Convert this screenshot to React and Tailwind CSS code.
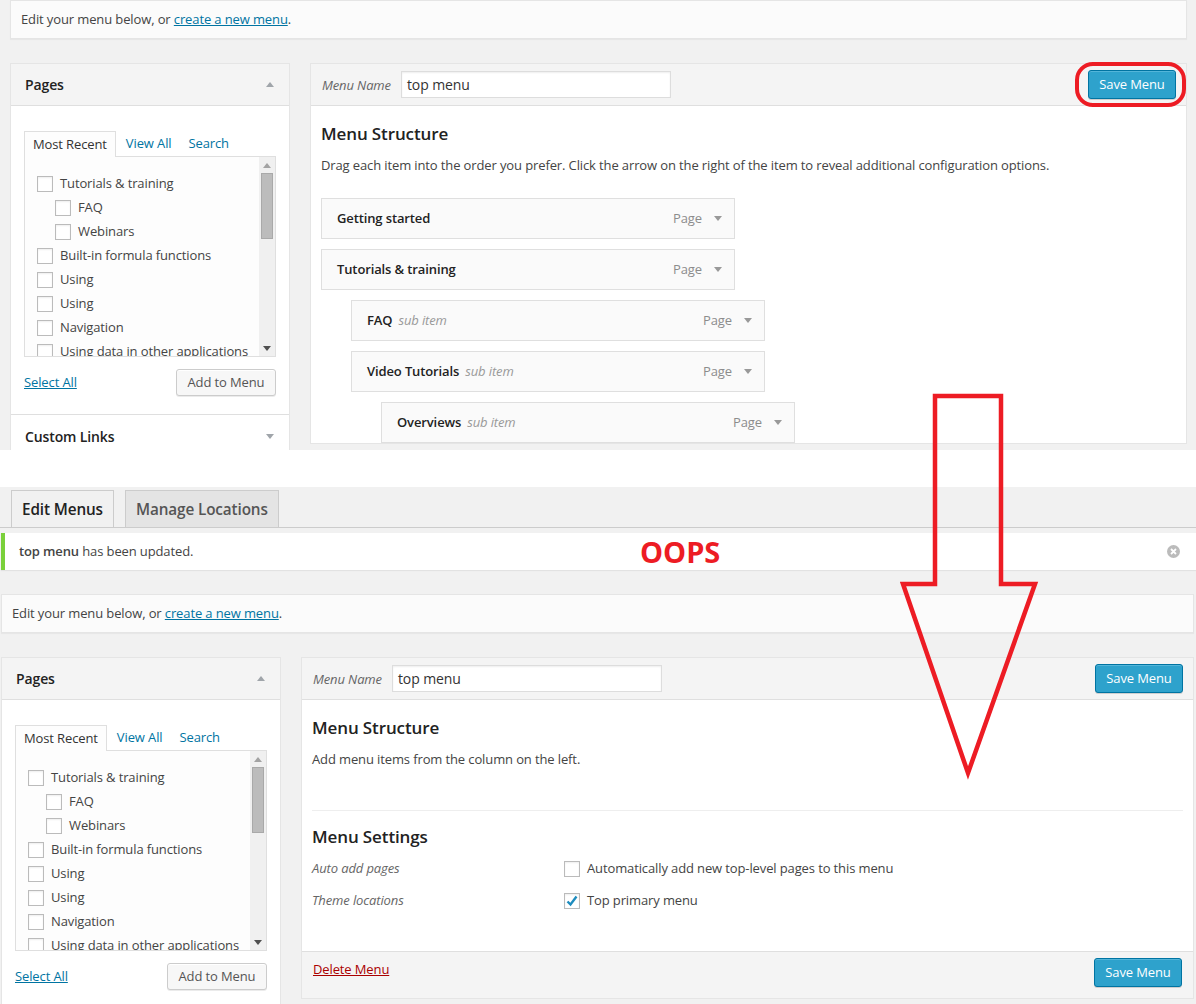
import React from 'react'

const pageItems = [
  { label: 'Tutorials & training' },
  { label: 'FAQ', child: true },
  { label: 'Webinars', child: true },
  { label: 'Built-in formula functions' },
  { label: 'Using' },
  { label: 'Using' },
  { label: 'Navigation' },
  { label: 'Using data in other applications' },
]

const menuItems = [
  { title: 'Getting started', depth: 0 },
  { title: 'Tutorials & training', depth: 0 },
  { title: 'FAQ', depth: 1, sub: true },
  { title: 'Video Tutorials', depth: 1, sub: true },
  { title: 'Overviews', depth: 2, sub: true },
]

const depthClass = ['', 'ml-[30px]', 'ml-[60px]']

function Triangle({ up = false, color = '#a0a5aa' }) {
  return (
    <svg width="8" height="5" viewBox="0 0 8 5" className="shrink-0">
      <polygon points={up ? '0,5 8,5 4,0' : '0,0 8,0 4,5'} fill={color} />
    </svg>
  )
}

function Checkbox({ checked = false }) {
  return (
    <span className="flex h-4 w-4 shrink-0 items-center justify-center border border-[#bbb] bg-white shadow-[inset_0_1px_2px_rgba(0,0,0,0.07)]">
      {checked && (
        <svg width="14" height="14" viewBox="0 0 14 14">
          <path d="M2.5 7.5 L5.5 10.5 L11.5 2.5" stroke="#1e8cbe" strokeWidth="2.4" fill="none" />
        </svg>
      )}
    </span>
  )
}

function SaveButton() {
  return (
    <button className="h-[29px] w-[88px] rounded-[3px] border border-[#0074a2] bg-[#2ea2cc] text-[13px] text-white shadow-[inset_0_1px_0_rgba(120,200,230,0.5),0_1px_0_rgba(0,0,0,0.15)]">
      Save Menu
    </button>
  )
}

function EditNotice() {
  return (
    <div className="flex h-[39px] items-center border border-[#e5e5e5] bg-[#fbfbfb] px-[10px] text-[13px] shadow-[0_1px_1px_rgba(0,0,0,0.04)]">
      Edit your menu below, or&nbsp;
      <a className="text-[#0074a2] underline">create a new menu</a>.
    </div>
  )
}

function PagesPanel() {
  return (
    <div className="w-[280px] shrink-0 border border-[#e5e5e5] bg-white">
      <div className="flex h-[42px] items-center justify-between border-b border-[#dfdfdf] bg-[#f4f4f4] pl-[14px] pr-[15px]">
        <h3 className="text-[14px] font-semibold text-[#222]">Pages</h3>
        <Triangle up />
      </div>
      <div className="px-[13px] pb-[18px] pt-[25px]">
        <div className="flex items-end text-[13px]">
          <span className="relative z-10 -mb-px border border-b-0 border-[#dfdfdf] bg-[#fdfdfd] px-[8px] leading-[25px] text-[#333]">
            Most Recent
          </span>
          <span className="ml-[10px] leading-[25px] text-[#0074a2]">View All</span>
          <span className="ml-[17px] leading-[25px] text-[#0074a2]">Search</span>
        </div>
        <div className="flex h-[201px] overflow-hidden border border-[#dfdfdf] bg-[#fdfdfd]">
          <ul className="flex-1 pl-[12px] pt-[15px] text-[13px] text-[#444]">
            {pageItems.map((item, i) => (
              <li key={i} className={`flex h-[24px] items-center gap-[7px] whitespace-nowrap ${item.child ? 'pl-[18px]' : ''}`}>
                <Checkbox />
                <span>{item.label}</span>
              </li>
            ))}
          </ul>
          <div className="flex w-[16px] shrink-0 flex-col items-center bg-[#f0f0f0]">
            <div className="flex h-[16px] items-center justify-center">
              <Triangle up color="#a3a3a3" />
            </div>
            <div className="h-[66px] w-[12px] border border-[#a9a9a9] bg-[#bcbcbc]" />
            <div className="flex-1" />
            <div className="flex h-[16px] items-center justify-center">
              <Triangle color="#505050" />
            </div>
          </div>
        </div>
        <div className="mt-[12px] flex items-center justify-between text-[13px]">
          <a className="text-[#0074a2] underline">Select All</a>
          <button className="h-[27px] w-[100px] rounded-[3px] border border-[#ccc] bg-[#f7f7f7] text-[13px] text-[#555] shadow-[inset_0_1px_0_#fff,0_1px_0_rgba(0,0,0,0.08)]">
            Add to Menu
          </button>
        </div>
      </div>
      <div className="flex h-[43px] items-center justify-between border-t border-[#dfdfdf] pl-[14px] pr-[15px]">
        <h3 className="text-[14px] font-semibold text-[#222]">Custom Links</h3>
        <Triangle />
      </div>
    </div>
  )
}

function MenuHeader() {
  return (
    <div className="flex h-[42px] items-center justify-between border-b border-[#dfdfdf] bg-[#f4f4f4] pl-[11px] pr-[10px]">
      <div className="flex items-center">
        <span className="mt-[2px] w-[79px] text-[13px] italic text-[#666]">Menu Name</span>
        <div className="flex h-[27px] w-[270px] items-center border border-[#ddd] bg-white px-[5px] text-[14px] text-[#333] shadow-[inset_0_1px_2px_rgba(0,0,0,0.07)]">
          top menu
        </div>
      </div>
      <SaveButton />
    </div>
  )
}

function MenuItem({ item }) {
  return (
    <div className={`flex h-[41px] w-[414px] items-center justify-between border border-[#dfdfdf] bg-[#fafafa] pl-[15px] pr-[12px] text-[13px] ${depthClass[item.depth]}`}>
      <div className="flex items-baseline gap-[6px]">
        <span className="font-semibold text-[#222]">{item.title}</span>
        {item.sub && <span className="italic text-[#999]">sub item</span>}
      </div>
      <div className="flex items-center gap-[12px]">
        <span className="text-[#8c8c8c]">Page</span>
        <Triangle color="#999" />
      </div>
    </div>
  )
}

function StructurePanel() {
  return (
    <div className="flex-1 border border-[#e5e5e5] bg-white">
      <MenuHeader />
      <div className="px-[10px] pt-[16px]">
        <h3 className="text-[17px] font-semibold leading-[24px] text-[#222]">Menu Structure</h3>
        <p className="mt-[10px] text-[13px] leading-[18px]">
          Drag each item into the order you prefer. Click the arrow on the right of the item to reveal additional configuration options.
        </p>
        <div className="mt-[24px] flex flex-col gap-[10px]">
          {menuItems.map((item, i) => (
            <MenuItem key={i} item={item} />
          ))}
        </div>
      </div>
    </div>
  )
}

function EmptyPanel() {
  return (
    <div className="flex-1 border border-[#e5e5e5] bg-white">
      <MenuHeader />
      <div className="px-[10px] pb-[34px] pt-[16px]">
        <h3 className="text-[17px] font-semibold leading-[24px] text-[#222]">Menu Structure</h3>
        <p className="mt-[10px] text-[13px] leading-[18px]">Add menu items from the column on the left.</p>
        <div className="mt-[42px] h-px bg-[#eee]" />
        <h3 className="mt-[14px] text-[17px] font-semibold leading-[24px] text-[#222]">Menu Settings</h3>
        <div className="mt-[4px] text-[13px]">
          <div className="flex h-[32px] items-center">
            <span className="w-[252px] italic text-[#666]">Auto add pages</span>
            <Checkbox />
            <span className="ml-[7px]">Automatically add new top-level pages to this menu</span>
          </div>
          <div className="flex h-[32px] items-center">
            <span className="w-[252px] italic text-[#666]">Theme locations</span>
            <Checkbox checked />
            <span className="ml-[7px]">Top primary menu</span>
          </div>
        </div>
      </div>
      <div className="flex h-[47px] items-center justify-between border-t border-[#dfdfdf] bg-[#f4f4f4] px-[11px] pb-[5px]">
        <a className="mb-[5px] text-[13px] text-[#a00] underline">Delete Menu</a>
        <SaveButton />
      </div>
    </div>
  )
}

export default function App() {
  return (
    <div className="relative h-[1004px] w-[1196px] overflow-hidden bg-[#f1f1f1] font-['Open_Sans',sans-serif] tracking-[-0.12px] text-[#444]">
      {/* before saving */}
      <div className="h-[450px] overflow-hidden pl-[10px] pr-[9px]">
        <EditNotice />
        <div className="mt-[24px] flex items-start gap-[20px]">
          <PagesPanel />
          <StructurePanel />
        </div>
      </div>

      <div className="h-[37px] bg-white" />

      {/* after saving */}
      <div className="h-[517px] overflow-hidden">
        <div className="flex items-end gap-[11px] border-b border-[#ccc] pl-[11px] pt-[3px]">
          <div className="flex h-[37px] items-center border border-b-0 border-[#ccc] px-[10px] pt-[1px] text-[15.3px] font-semibold text-[#222]">
            Edit Menus
          </div>
          <div className="flex h-[37px] items-center border border-b-0 border-[#ccc] bg-[#e4e4e4] px-[10px] pt-[1px] text-[15.3px] font-semibold text-[#555]">
            Manage Locations
          </div>
        </div>
        <div className="ml-[1px] mt-[5px] flex h-[37px] items-center justify-between border-l-4 border-[#7ad03a] bg-white pl-[14px] pr-[16px] text-[13px] shadow-[0_1px_1px_rgba(0,0,0,0.06)]">
          <p>
            <strong className="font-semibold">top menu</strong> has been updated.
          </p>
          <svg width="13" height="13" viewBox="0 0 13 13">
            <circle cx="6.5" cy="6.5" r="6.5" fill="#bbb" />
            <path d="M4 4 L9 9 M9 4 L4 9" stroke="#fff" strokeWidth="1.8" />
          </svg>
        </div>
        <div className="ml-[1px] mr-[2px] mt-[24px]">
          <EditNotice />
        </div>
        <div className="ml-[1px] mr-[2px] mt-[24px] flex items-start gap-[20px]">
          <PagesPanel />
          <EmptyPanel />
        </div>
      </div>

      {/* annotations */}
      <p className="absolute left-[640px] top-[537px] text-[29px] font-bold leading-[29px] tracking-normal text-[#ed1c24]">OOPS</p>
      <svg className="pointer-events-none absolute left-0 top-0" width="1196" height="1004">
        <rect x="1077" y="64" width="107" height="41" rx="16" fill="none" stroke="#ed1c24" strokeWidth="4" />
        <polygon
          points="935,396 1001,396 1001,584 1035,584 968,773 903,584 935,584"
          fill="none"
          stroke="#ed1c24"
          strokeWidth="4.5"
        />
      </svg>
    </div>
  )
}
